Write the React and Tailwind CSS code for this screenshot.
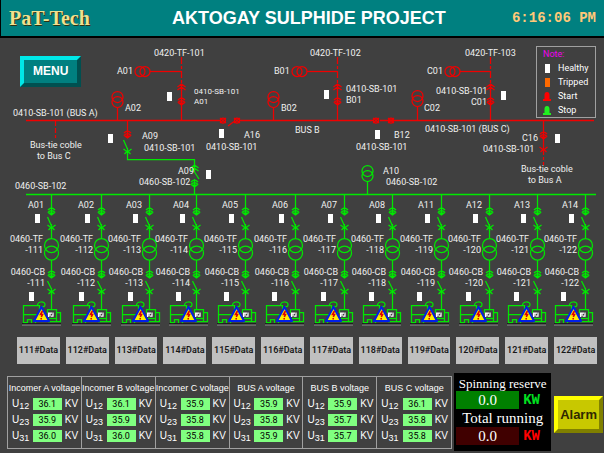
const RED = "#f00000";
const GREEN = "#00e800";

// x: feeder line, gen: left edge of the generator set
const FEEDERS = [
  { bay: "A01", no: 111, x: 52, gen: 23 },
  { bay: "A02", no: 112, x: 102, gen: 73 },
  { bay: "A03", no: 113, x: 150, gen: 122 },
  { bay: "A04", no: 114, x: 197, gen: 170 },
  { bay: "A05", no: 115, x: 246, gen: 218 },
  { bay: "A06", no: 116, x: 296, gen: 266 },
  { bay: "A07", no: 117, x: 345, gen: 315 },
  { bay: "A08", no: 118, x: 393, gen: 363 },
  { bay: "A11", no: 119, x: 442, gen: 411 },
  { bay: "A12", no: 120, x: 490, gen: 460 },
  { bay: "A13", no: 121, x: 538, gen: 508 },
  { bay: "A14", no: 122, x: 586, gen: 555 },
];

const LABELS = [
  [154, 56, "0420-TF-101"],
  [310, 56, "0420-TF-102"],
  [465, 56, "0420-TF-103"],
  [117, 74, "A01"],
  [274, 74, "B01"],
  [427, 74, "C01"],
  [125, 111, "A02"],
  [281, 111, "B02"],
  [424, 111, "C02"],
  [346, 92, "0410-SB-101"],
  [346, 103, "B01"],
  [436, 94, "0410-SB-101"],
  [471, 105, "C01"],
  [13, 116, "0410-SB-101 (BUS A)"],
  [30, 148, "Bus-tie coble"],
  [37, 159, "to Bus C"],
  [142, 139, "A09"],
  [144, 151, "0410-SB-101"],
  [178, 174, "A09"],
  [139, 185, "0460-SB-102"],
  [15, 189, "0460-SB-102"],
  [244, 138, "A16"],
  [206, 150, "0410-SB-101"],
  [295, 133, "BUS B"],
  [394, 138, "B12"],
  [356, 150, "0410-SB-101"],
  [425, 132, "0410-SB-101 (BUS C)"],
  [522, 141, "C16"],
  [483, 152, "0410-SB-101"],
  [521, 172, "Bus-tie coble"],
  [528, 183, "to Bus A"],
  [383, 174, "A10"],
  [386, 185, "0460-SB-102"],
];

const LAMPS = [
  [167, 92],
  [324, 90],
  [501, 91],
  [108, 134],
  [206, 170],
  [219, 129],
  [375, 130],
  [555, 134],
];

const VOLTAGES = [
  { title: "Incomer A voltage", values: ["36.1", "35.9", "36.0"] },
  { title: "Incomer B voltage", values: ["36.1", "35.9", "36.0"] },
  { title: "Incomer C voltage", values: ["35.9", "35.8", "35.8"] },
  { title: "BUS A voltage", values: ["35.9", "35.8", "35.9"] },
  { title: "BUS B voltage", values: ["35.9", "35.7", "35.7"] },
  { title: "BUS C voltage", values: ["36.1", "35.8", "35.8"] },
];

const PHASES = ["12", "23", "31"];

function Label({ x, y, end, small, children }) {
  return (
    <text
      x={x}
      y={y}
      textAnchor={end ? "end" : "start"}
      className={
        small
          ? "fill-[#f0f0f0] font-['Roboto',sans-serif] text-[8px]"
          : "fill-[#f0f0f0] font-['Roboto',sans-serif] text-[9px]"
      }
    >
      {children}
    </text>
  );
}

function Lamp({ x, y }) {
  return <rect x={x} y={y} width="5" height="9" fill="#fff" />;
}

// draw-out contact, two arcs over a solid dot
function Contact({ x, y, color }) {
  return (
    <g transform={`translate(${x} ${y})`} stroke={color} fill="none">
      <path d="M-3.5 3 Q0 -1 3.5 3 M-3.5 5.5 Q0 1.5 3.5 5.5" />
      <path d="M-2.5 6 H2.5 L0 8 Z" fill={color} />
      <path d="M0 0 V8" />
    </g>
  );
}

// the cross under a switch blade
function Cross({ x, y, color }) {
  return (
    <path
      d={`M${x - 4} ${y - 2} L${x} ${y + 1} L${x + 4} ${y - 2} M${x - 3} ${y + 3} L${x} ${y} L${x + 3} ${y + 3} M${x} ${y - 3} V${y + 4}`}
      stroke={color}
      fill="none"
    />
  );
}

function Chevrons({ x, y, color }) {
  return (
    <path
      d={`M${x - 4} ${y + 3} L${x} ${y} L${x + 4} ${y + 3} M${x - 4} ${y + 6} L${x} ${y + 3} L${x + 4} ${y + 6} M${x} ${y} V${y + 7}`}
      stroke={color}
      fill="none"
    />
  );
}

function Incomer({ x, tf, color }) {
  return (
    <g stroke={color} fill="none">
      <path d={`M${x} 57 V84`} strokeDasharray="7 2 3 2" />
      <path d={`M${x} 90 V98 M${x} 105 V120`} />
      <circle cx={tf} cy="71.5" r="5" />
      <circle cx={tf + 5} cy="71.5" r="5" />
      <path d={`M${tf + 10} 71.5 H${x}`} />
      <Chevrons x={x} y={84} color={color} />
      <Contact x={x} y={97} color={color} />
    </g>
  );
}

function BusTransformer({ x, y, bottom, color }) {
  return (
    <g stroke={color} fill="none">
      <circle cx={x} cy={y} r="5.5" />
      <circle cx={x} cy={y + 5} r="5.5" />
      <path d={`M${x} ${y + 10} V${bottom}`} />
    </g>
  );
}

function BusCoupler({ x }) {
  return (
    <g stroke={RED} fill="none">
      <circle cx={x} cy="120.5" r="2.5" />
      <path d={`M${x - 3} 118 L${x + 3} 123 M${x - 3} 123 L${x + 3} 118`} />
    </g>
  );
}

function Generator({ x }) {
  return (
    <g transform={`translate(${x} 300)`} fill="none">
      <g stroke={GREEN}>
        <path d="M0.5 23 V5.5 H16 M0.5 14.5 H15 M0.5 22.5 H4 M16.5 5 V10" />
        <path d="M4.5 23 V19.5 H8.5 V23 M12.5 23 V20 H15" />
        <path d="M14.5 5.5 C14.5 1 22 1 22 4.5 C22 7 20 7 19.5 6" />
        <path d="M24 9.5 H33.5 V12.5 H37.5 V21.5 H25 M33.5 12.5 V21.5 M24.5 9.5 V13" />
        <path d="M26 18.5 H33" />
      </g>
      <path d="M-1 24 H38" stroke="#000" strokeWidth="1" />
      <path d="M-1 25 H38" stroke="#909090" strokeWidth="1" />
      <path d="M25.5 17 V13 H29 M27 13 V16.5 M30 12.5 V16 H28" stroke="#fff" />
      <path d="M18.5 7 L26 21 H11 Z" fill="#ffee00" stroke="#0020e8" strokeWidth="2" strokeLinejoin="round" />
      <path d="M19.5 11 L17.5 14.5 H19.5 L18.3 17 M18.2 18 V19.5" stroke="#e00000" strokeWidth="1.6" />
    </g>
  );
}

function Feeder({ bay, no, x, gen }) {
  const line = x - 0.5;
  return (
    <g>
      <g stroke={GREEN} fill="none">
        <path d={`M${line} 195 V208 M${line - 4} 217 L${line} 226 M${line} 230 V238`} />
        <circle cx={line} cy="245.5" r="7" />
        <circle cx={line} cy="253" r="7" />
        <path d={`M${line} 260 V270 M${line - 4} 281 L${line} 289 M${line} 293 V309`} />
      </g>
      <Contact x={line} y={207} color={GREEN} />
      <Cross x={line} y={227} color={GREEN} />
      <Contact x={line} y={270} color={GREEN} />
      <Cross x={line} y={291} color={GREEN} />
      <Label x={x - 8} y={208} end>{bay}</Label>
      <Label x={x - 9} y={242} end>0460-TF</Label>
      <Label x={x - 9} y={253} end>{`-${no}`}</Label>
      <Label x={x - 7} y={275} end>0460-CB</Label>
      <Label x={x - 7} y={286} end>{`-${no}`}</Label>
      <Lamp x={x - 17} y={214} />
      <Lamp x={gen + 6} y={292} />
      <Generator x={gen} />
    </g>
  );
}

function Diagram() {
  return (
    <svg viewBox="0 38 604 292" strokeWidth="1.25" className="block h-auto w-full">
      {/* 0410 bus */}
      <g stroke={RED} fill="none">
        <path d="M26 120.5 H221 M240 120.5 H373 M380 120.5 H594" strokeWidth="1.5" />
        <path d="M228 126 L234 121.5" />
        <path d="M55.5 121 V138" strokeDasharray="5 2" />
        <path d="M127.5 121 V131 M543.5 121 V131 M543.5 138 V146" />
        <path d="M543.5 152 V165" strokeDasharray="3 2" />
      </g>
      <Incomer x={181.5} tf={140} color={RED} />
      <Incomer x={337.5} tf={297} color={RED} />
      <Incomer x={490.5} tf={450} color={RED} />
      <BusTransformer x={117.5} y={97} bottom={120} color={RED} />
      <BusTransformer x={273.5} y={97} bottom={120} color={RED} />
      <BusTransformer x={417.5} y={96} bottom={120} color={RED} />
      <BusCoupler x={223} />
      <BusCoupler x={237} />
      <BusCoupler x={376} />
      <BusCoupler x={391} />
      <Contact x={127.5} y={130} color={RED} />
      <Contact x={543.5} y={131} color={RED} />
      <Cross x={543.5} y={149} color={RED} />

      {/* 0460 bus and the tie between the two */}
      <g stroke={GREEN} fill="none">
        <path d="M26 194.5 H596" strokeWidth="1.5" />
        <path d="M123.5 140 L127.5 149 M127.5 154 V159.5 H194.5 V166 M194.5 172 L199 179 M194.5 187 V194" />
      </g>
      <Cross x={127.5} y={151} color={GREEN} />
      <Chevrons x={194.5} y={165} color={GREEN} />
      <Contact x={194.5} y={179} color={GREEN} />
      <BusTransformer x={367.5} y={171} bottom={194} color={GREEN} />

      {FEEDERS.map((f) => (
        <Feeder key={f.no} {...f} />
      ))}
      {LAMPS.map(([x, y]) => (
        <Lamp key={`${x}-${y}`} x={x} y={y} />
      ))}
      {LABELS.map(([x, y, text]) => (
        <Label key={`${x}-${y}`} x={x} y={y}>{text}</Label>
      ))}
      <Label x={194} y={94} small>0410-SB-101</Label>
      <Label x={194} y={104} small>A01</Label>
    </svg>
  );
}

function Bell({ color }) {
  return (
    <svg viewBox="0 0 8 9" className="h-[9px] w-2" fill={color}>
      <path d="M1.5 7 V3 Q1.5 0 4 0 Q6.5 0 6.5 3 V7 H8 V9 H0 V7 Z" />
    </svg>
  );
}

function Legend() {
  return (
    <div className="absolute top-2 right-2 w-[60px] border border-[#a0a0a0] px-1.5 font-['Roboto',sans-serif] text-[9px] leading-[14px] text-white">
      <p className="text-[#f000f0]">Note:</p>
      <ul>
        <li className="flex items-center gap-2">
          <span className="ml-0.5 h-[9px] w-[5px] bg-white" />
          Healthy
        </li>
        <li className="flex items-center gap-2">
          <span className="ml-0.5 h-[9px] w-[5px] bg-[#ff6a00]" />
          Tripped
        </li>
        <li className="flex items-center gap-[7px]">
          <Bell color="#ff0000" />
          Start
        </li>
        <li className="flex items-center gap-[7px]">
          <Bell color="#20f020" />
          Stop
        </li>
      </ul>
    </div>
  );
}

function VoltageTable({ title, values }) {
  return (
    <div className="border-r border-[#a0a0a0] pb-1 last:border-r-0">
      <table className="w-full">
        <caption className="pt-[5px] pb-0.5 text-center text-[9px] leading-[12px] whitespace-nowrap">{title}</caption>
        <tbody>
          {PHASES.map((phase, i) => (
            <tr key={phase} className="h-4">
              <th className="py-0 pr-0 pl-1 text-left text-[10px] leading-[12px] font-normal">
                U<span className="relative top-0.5 text-[9px]">{phase}</span>
              </th>
              <td className="w-[29px] p-0">
                <span className="block bg-[#80ff80] text-center font-['Roboto',sans-serif] text-[9px] leading-[12px] text-black">
                  {values[i]}
                </span>
              </td>
              <td className="py-0 pr-0 pl-[3px] text-[10px] leading-[12px]">KV</td>
            </tr>
          ))}
        </tbody>
      </table>
    </div>
  );
}

function PowerPanel() {
  return (
    <div className="w-[97px] bg-black px-0.5 pt-1 pb-1.5 font-['Liberation_Serif',serif] text-white">
      <p className="text-center text-[13px] leading-[14px] whitespace-nowrap">Spinning reserve</p>
      <div className="flex items-center gap-1">
        <span className="w-[63px] bg-[#008000] text-center text-[15px] leading-[18px]">0.0</span>
        <span className="font-['Liberation_Mono',monospace] text-[14px] leading-[18px] font-bold text-[#00e020]">KW</span>
      </div>
      <p className="text-center text-[15px] leading-[18px] whitespace-nowrap">Total running</p>
      <div className="flex items-center gap-1">
        <span className="w-[63px] bg-[#400000] text-center text-[15px] leading-[18px]">0.0</span>
        <span className="font-['Liberation_Mono',monospace] text-[14px] leading-[18px] font-bold text-[#ff0000]">KW</span>
      </div>
    </div>
  );
}

export default function App() {
  return (
    <div className="min-h-screen bg-[#404040] font-['Liberation_Sans',sans-serif] text-white">
      <header className="flex h-[38px] items-center justify-between border-b-2 border-l border-black bg-[#008080] pr-2 pl-2">
        <span className="font-['Liberation_Serif',serif] text-[20px] leading-[24px] font-bold text-[#f0e090] [text-shadow:1px_1px_0_#303010]">
          PaT-Tech
        </span>
        <h1 className="pl-4 text-[18px] leading-[24px] font-bold whitespace-nowrap">AKTOGAY SULPHIDE PROJECT</h1>
        <time className="text-right font-['Liberation_Mono',monospace] text-[14px] leading-[24px] font-bold text-[#ffc878]">
          6:16:06 PM
        </time>
      </header>

      <main>
        <div className="relative">
          <Diagram />
          <button className="absolute top-[18px] left-5 border-4 border-t-[#00e8e8] border-r-[#005050] border-b-[#005050] border-l-[#00e8e8] bg-[#008080] px-[9px] py-1 text-[12px] leading-[15px] font-bold">
            MENU
          </button>
          <Legend />
        </div>

        <div className="grid grid-cols-12 gap-1.5 pt-[7px] pr-[7px] pb-2 pl-[17px]">
          {FEEDERS.map((f) => (
            <button
              key={f.no}
              className="h-[27px] bg-[#c0c0c0] font-['Roboto',sans-serif] text-[9px] font-semibold whitespace-nowrap text-[#181818]"
            >
              {`${f.no}#Data`}
            </button>
          ))}
        </div>

        <div className="flex items-center gap-0.5 pt-px pr-px pl-[7px]">
          <section className="grid flex-1 grid-cols-6 border border-[#a0a0a0]">
            {VOLTAGES.map((v) => (
              <VoltageTable key={v.title} {...v} />
            ))}
          </section>
          <PowerPanel />
          <button className="mt-1 ml-px border-4 border-t-[#ffff00] border-r-[#808000] border-b-[#808000] border-l-[#ffff00] bg-[#c8c800] px-0.5 py-1.5 text-[13px] leading-[17px] font-bold text-[#302800]">
            Alarm
          </button>
        </div>
      </main>
    </div>
  );
}
